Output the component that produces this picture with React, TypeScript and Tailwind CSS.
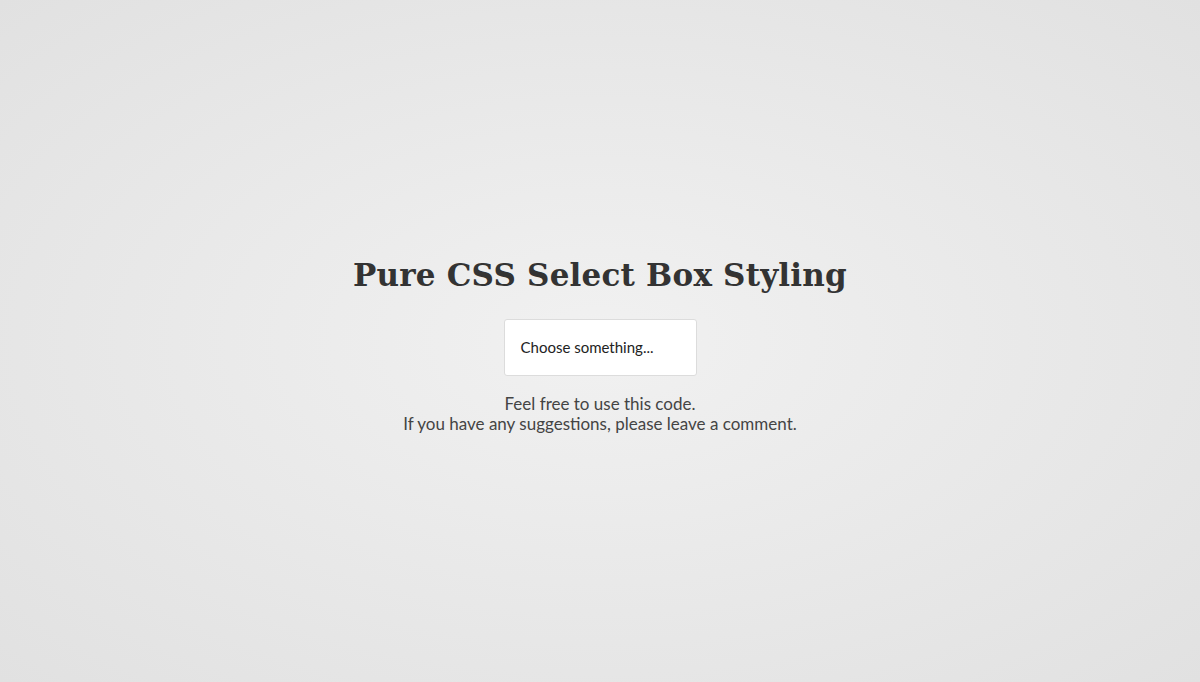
import React from 'react';

export default function App() {
  return (
    <div className="flex h-[682px] w-full flex-col items-center justify-center bg-[radial-gradient(ellipse_at_center,#f1f1f1_0%,#e1e1e1_100%)] pt-[12px] text-[#333]">
      <h1 className="font-['DejaVu_Serif',serif] text-[31px] font-bold leading-none tracking-[0.2px] text-[#333]">
        Pure CSS Select Box Styling
      </h1>
      <div className="mt-[28px] flex h-[57px] w-[193px] items-center rounded-[3px] border border-[#dcdcdc] bg-white px-4 font-['Lato',sans-serif] text-[15px] text-[#222]">
        Choose something...
      </div>
      <p className="mt-[18px] text-center font-['Lato',sans-serif] text-[17px] leading-[20px] text-[#444]">
        Feel free to use this code.
        <br />
        If you have any suggestions, please leave a comment.
      </p>
    </div>
  );
}
